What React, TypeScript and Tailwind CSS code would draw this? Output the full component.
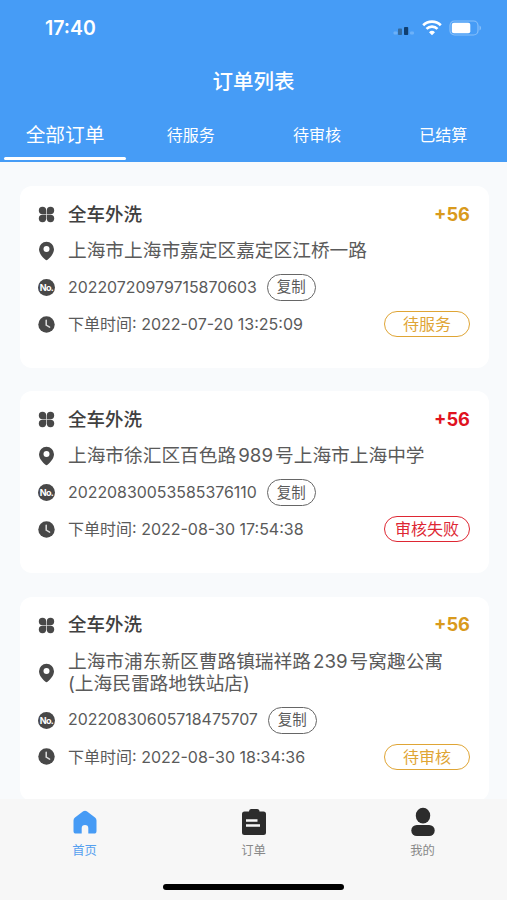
type Order = {
  address: string[];
  no: string;
  time: string;
  price: string;
  priceColor: string;
  status: string;
  statusColor: string;
};

const orders: Order[] = [
  {
    address: ["上海市上海市嘉定区嘉定区江桥一路"],
    no: "20220720979715870603",
    time: "2022-07-20 13:25:09",
    price: "+56",
    priceColor: "text-[#d99a1c]",
    status: "待服务",
    statusColor: "text-[#dfa535] border-[#dfa535]",
  },
  {
    address: ["上海市徐汇区百色路 989 号上海市上海中学"],
    no: "20220830053585376110",
    time: "2022-08-30 17:54:38",
    price: "+56",
    priceColor: "text-[#e0121f]",
    status: "审核失败",
    statusColor: "text-[#de2733] border-[#de2733]",
  },
  {
    address: ["上海市浦东新区曹路镇瑞祥路 239 号窝趣公寓", "(上海民雷路地铁站店)"],
    no: "20220830605718475707",
    time: "2022-08-30 18:34:36",
    price: "+56",
    priceColor: "text-[#d99a1c]",
    status: "待审核",
    statusColor: "text-[#dfa535] border-[#dfa535]",
  },
];

const tabs = ["全部订单", "待服务", "待审核", "已结算"];

function CloverIcon() {
  return (
    <svg width="17" height="17" viewBox="0 0 17 17" fill="#484848">
      <path d="M4.500 .8A3.700 3.700 0 0 1 8.200 4.500V8.200H4.500A3.700 3.700 0 0 1 4.500 .8Z" />
      <path d="M12.500 .8A3.700 3.700 0 0 0 8.800 4.500V8.200h3.700A3.700 3.700 0 0 0 12.500 .8Z" />
      <path d="M4.500 16.200A3.700 3.700 0 0 0 8.200 12.500V8.800H4.500A3.700 3.700 0 0 0 4.500 16.200Z" />
      <path d="M12.500 16.200A3.700 3.700 0 0 1 8.800 12.500V8.800h3.700A3.700 3.700 0 0 1 12.500 16.200Z" />
    </svg>
  );
}

function PinIcon() {
  return (
    <svg width="17" height="20" viewBox="0 0 17 20">
      <path d="M8.500 .8a7.500 7.500 0 0 1 7.500 7.500c0 4.400-3.900 8.200-6.200 10.300a2 2 0 0 1-2.600 0C4.900 16.500 1 12.700 1 8.300A7.500 7.500 0 0 1 8.500 .8Z" fill="#484848" />
      <circle cx="8.500" cy="8" r="3" fill="#fff" />
    </svg>
  );
}

function NoIcon() {
  return (
    <span className="flex size-[17px] items-center justify-center rounded-full bg-[#484848] text-[9px] leading-none font-bold tracking-[-0.7px] text-white">
      No.
    </span>
  );
}

function ClockIcon() {
  return (
    <svg width="17" height="17" viewBox="0 0 17 17">
      <circle cx="8.500" cy="8.500" r="8.200" fill="#484848" />
      <path d="M8.200 4.200v5l3.400 1.900" fill="none" stroke="#ddd" strokeWidth="1.500" strokeLinecap="round" strokeLinejoin="round" />
    </svg>
  );
}

function StatusBar() {
  return (
    <div className="flex h-[56px] items-center justify-between pr-[25px] pl-[45px]">
      <span className="pt-[2px] text-[19.500px] font-semibold text-white">17:40</span>
      <div className="flex items-center">
        <svg className="mt-[2px]" width="23" height="16" viewBox="0 0 23 16">
          <rect x="0.500" y="10.500" width="4" height="3" rx="1" fill="#6cb1f9" />
          <rect x="5" y="7.500" width="4" height="6.500" rx="0.800" fill="#346a9e" />
          <rect x="11" y="6" width="4.200" height="8" rx="0.800" fill="#103f70" />
          <rect x="17" y="10.500" width="4" height="3" rx="1" fill="#6cb1f9" />
        </svg>
        <svg className="ml-[6px]" width="20" height="16" viewBox="0 0 20 16" fill="none" stroke="#fff" strokeWidth="2.700">
          <path d="M1.200 5.300a12.500 12.500 0 0 1 17.600 0" />
          <path d="M4.500 8.900a7.800 7.800 0 0 1 11 0" />
          <path d="M10 15.200L7 12.200a4.300 4.300 0 0 1 6 0Z" fill="#fff" stroke="none" />
        </svg>
        <svg className="ml-[7px]" width="33" height="16" viewBox="0 0 33 16">
          <rect x="1" y="1" width="28" height="14" rx="4.500" fill="none" stroke="#86bffa" strokeWidth="1.200" />
          <rect x="2.800" y="2.800" width="18.500" height="10.400" rx="2" fill="#fff" />
          <path d="M30.500 5.500c2 .8 2 4.200 0 5Z" fill="#86bffa" />
        </svg>
      </div>
    </div>
  );
}

function OrderCard({ order }: { order: Order }) {
  return (
    <section className="flex flex-col rounded-[12px] bg-white pt-[10px] pr-[19px] pb-[26px] pl-[18px] text-[#5a5a5a]">
      <div className="flex h-[37px] items-center">
        <span className="flex w-[17px] justify-center"><CloverIcon /></span>
        <h2 className="ml-[13px] flex-1 text-[18.500px] font-medium text-[#404040]">全车外洗</h2>
        <span className={`text-[18.300px] font-bold ${order.priceColor}`}>{order.price}</span>
      </div>
      <div className="flex min-h-[36px] items-center py-[7px]">
        <span className="flex w-[17px] justify-center"><PinIcon /></span>
        <div className="ml-[13px] text-[18.700px] leading-[22px] [word-spacing:-3.200px] whitespace-nowrap">
          {order.address.map((line) => (
            <p key={line}>{line}</p>
          ))}
        </div>
      </div>
      <div className="flex h-[37px] items-center">
        <span className="flex w-[17px] justify-center"><NoIcon /></span>
        <span className="ml-[13px] text-[15.900px]">{order.no}</span>
        <button className="ml-[10px] flex h-[27px] w-[49px] items-center justify-center rounded-full border-[1.500px] border-[#666] text-[14.500px] leading-none">
          复制
        </button>
      </div>
      <div className="flex h-[36px] items-center">
        <span className="flex w-[17px] justify-center"><ClockIcon /></span>
        <p className="ml-[13px] flex-1 text-[16px]">下单时间: {order.time}</p>
        <span className={`flex h-[26px] w-[86px] items-center justify-center rounded-full border-[1.500px] text-[16px] leading-none ${order.statusColor}`}>
          {order.status}
        </span>
      </div>
    </section>
  );
}

function BottomNav() {
  return (
    <nav className="flex h-[101px] shrink-0 flex-col items-center bg-[#f7f7f7]">
      <div className="grid w-full grid-cols-3 pt-[8px] text-[12.300px] leading-[18px] text-[#888]">
        <div className="flex flex-col items-center gap-[5px] text-[#55a0ef]">
          <svg width="28" height="30" viewBox="0 0 28 30">
            <path d="M12.200 4.300a3 3 0 0 1 3.600 0l8.200 6.300a3.500 3.500 0 0 1 1.500 2.800V24a2.600 2.600 0 0 1-2.600 2.600H17.300v-5.300a3.300 3.300 0 0 0-6.600 0v5.300H5.100A2.600 2.600 0 0 1 2.500 24V13.400A3.500 3.500 0 0 1 4 10.600Z" fill="#469bf5" />
          </svg>
          <span>首页</span>
        </div>
        <div className="flex flex-col items-center gap-[5px]">
          <svg width="28" height="30" viewBox="0 0 28 30">
            <path d="M9 4.500A2.500 2.500 0 0 1 11 2h6a2.500 2.500 0 0 1 2.500 2.500h4A2.500 2.500 0 0 1 26 7v18.500a2.500 2.500 0 0 1-2.500 2.500h-19A2.500 2.500 0 0 1 2 25.500V7a2.500 2.500 0 0 1 2.500-2.500Z" fill="#2c2c2c" />
            <path d="M6 13.500h11.500M6 18.500h14" stroke="#f7f7f7" strokeWidth="2.300" />
          </svg>
          <span>订单</span>
        </div>
        <div className="flex flex-col items-center gap-[5px]">
          <svg width="28" height="30" viewBox="0 0 28 30" fill="#2c2c2c">
            <ellipse cx="14" cy="8.700" rx="7.200" ry="7.900" />
            <rect x="2.300" y="18" width="23.400" height="11" rx="5.500" />
          </svg>
          <span>我的</span>
        </div>
      </div>
      <div className="mt-[24px] h-[6px] w-[181px] rounded-full bg-black" />
    </nav>
  );
}

export default function App() {
  return (
    <main className="flex h-[900px] w-[507px] flex-col overflow-hidden bg-[#f8fafc] font-['Inter','Noto_Sans_CJK_SC',sans-serif]">
      <header className="h-[162px] shrink-0 bg-[#469cf6] text-white">
        <StatusBar />
        <h1 className="flex h-[50px] items-center justify-center pt-[3px] text-[20.500px] font-medium">订单列表</h1>
        <div className="flex h-[56px]">
          {tabs.map((tab, i) => (
            <div key={tab} className={`flex flex-col items-center ${i === 0 ? "w-[128px] pl-[2px] text-[19.700px]" : "flex-1 pr-[1px] text-[16px]"}`}>
              <span className={`flex h-[51px] items-center ${i === 0 ? "pt-[9px]" : "pt-[7px]"}`}>{tab}</span>
              {i === 0 && <span className="h-[3px] w-[122px] rounded-full bg-white" />}
            </div>
          ))}
        </div>
      </header>
      <div className="flex min-h-0 flex-1 flex-col gap-[23.300px] overflow-hidden pt-[24px] pr-[18px] pl-[20px]">
        {orders.map((order) => (
          <OrderCard key={order.no} order={order} />
        ))}
      </div>
      <BottomNav />
    </main>
  );
}
